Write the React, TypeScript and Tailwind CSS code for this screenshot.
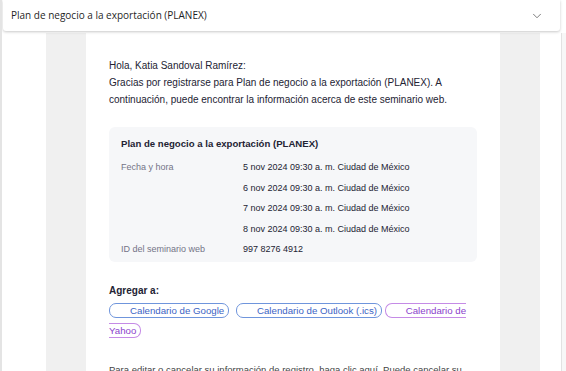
import { ChevronDown } from "lucide-react";

const sessions = [
  "5 nov 2024 09:30 a. m. Ciudad de México",
  "6 nov 2024 09:30 a. m. Ciudad de México",
  "7 nov 2024 09:30 a. m. Ciudad de México",
  "8 nov 2024 09:30 a. m. Ciudad de México",
];

function CalButton({ label, purple, gap }: { label: string; purple?: boolean; gap?: boolean }) {
  return (
    <span
      className={
        purple
          ? "rounded-[7px] border border-[#c58be6] py-[1px] pl-[20px] pr-[4px] text-[#8b3fcc]"
          : gap
            ? "mr-[4px] rounded-[7px] border border-[#6f95dc] py-[1px] pl-[20px] pr-[4px] text-[#3c64c4]"
            : "rounded-[7px] border border-[#6f95dc] py-[1px] pl-[20px] pr-[4px] text-[#3c64c4]"
      }
    >
      {label}
    </span>
  );
}

export default function App() {
  return (
    <div className="flex h-[371px] w-[566px] flex-col overflow-hidden border-l-[2px] border-[#e4e4e4] bg-white font-['Liberation_Sans',Arial,sans-serif]">
      <div className="z-10 ml-[1px] mr-[6px] flex h-[31px] shrink-0 items-center justify-between rounded-b-[3px] bg-white pl-[8px] pr-[16px] shadow-[0_1px_3px_rgba(0,0,0,0.22)]">
        <span className="font-['Open_Sans',sans-serif] text-[10px] text-[#1f1f1f]">
          Plan de negocio a la exportación (PLANEX)
        </span>
        <ChevronDown size={14} strokeWidth={1.3} className="text-[#555]" />
      </div>

      <div className="mt-[2px] flex min-h-0 flex-1">
        <div className="w-[44px] shrink-0" />
        <div className="w-[40px] shrink-0 bg-[#f0f0f0]" />
        <div className="w-[414px] shrink-0 px-[23px] pt-[24px] text-[10px] leading-[17px] text-[#232333]">
          <p>Hola, Katia Sandoval Ramírez:</p>
          <p>
            Gracias por registrarse para Plan de negocio a la exportación (PLANEX). A
            continuación, puede encontrar la información acerca de este seminario web.
          </p>

          <div className="mt-[19px] w-[368px] rounded-[6px] bg-[#f6f7f9] px-[12px] pb-[2px] pt-[8px]">
            <p className="text-[9.6px] font-bold leading-[18px]">Plan de negocio a la exportación (PLANEX)</p>
            <div className="mt-[4px] grid grid-cols-[122px_1fr] text-[9px] leading-[20.5px]">
              <span className="text-[#747487]">Fecha y hora</span>
              <div className="flex flex-col">
                {sessions.map((s) => (
                  <span key={s}>{s}</span>
                ))}
              </div>
              <span className="text-[#747487]">ID del seminario web</span>
              <span>997 8276 4912</span>
            </div>
          </div>

          <p className="mt-[20px] font-bold">Agregar a:</p>
          <div className="mt-[2px] text-[9.7px] leading-[20.5px]">
            <CalButton label="Calendario de Google" gap />{" "}
            <CalButton label="Calendario de Outlook (.ics)" />{" "}
            <CalButton label="Calendario de Yahoo" purple />
          </div>

          <p className="mt-[19px] whitespace-nowrap text-[9.5px] text-[#444]">
            Para editar o cancelar su información de registro, haga clic aquí. Puede cancelar su
          </p>
        </div>
        <div className="w-[40px] shrink-0 bg-[#f0f0f0]" />
        <div className="flex-1" />
        <div className="w-[5px] shrink-0 border-l border-[#e2e2e2] bg-[#f7f7f7]" />
      </div>
    </div>
  );
}
